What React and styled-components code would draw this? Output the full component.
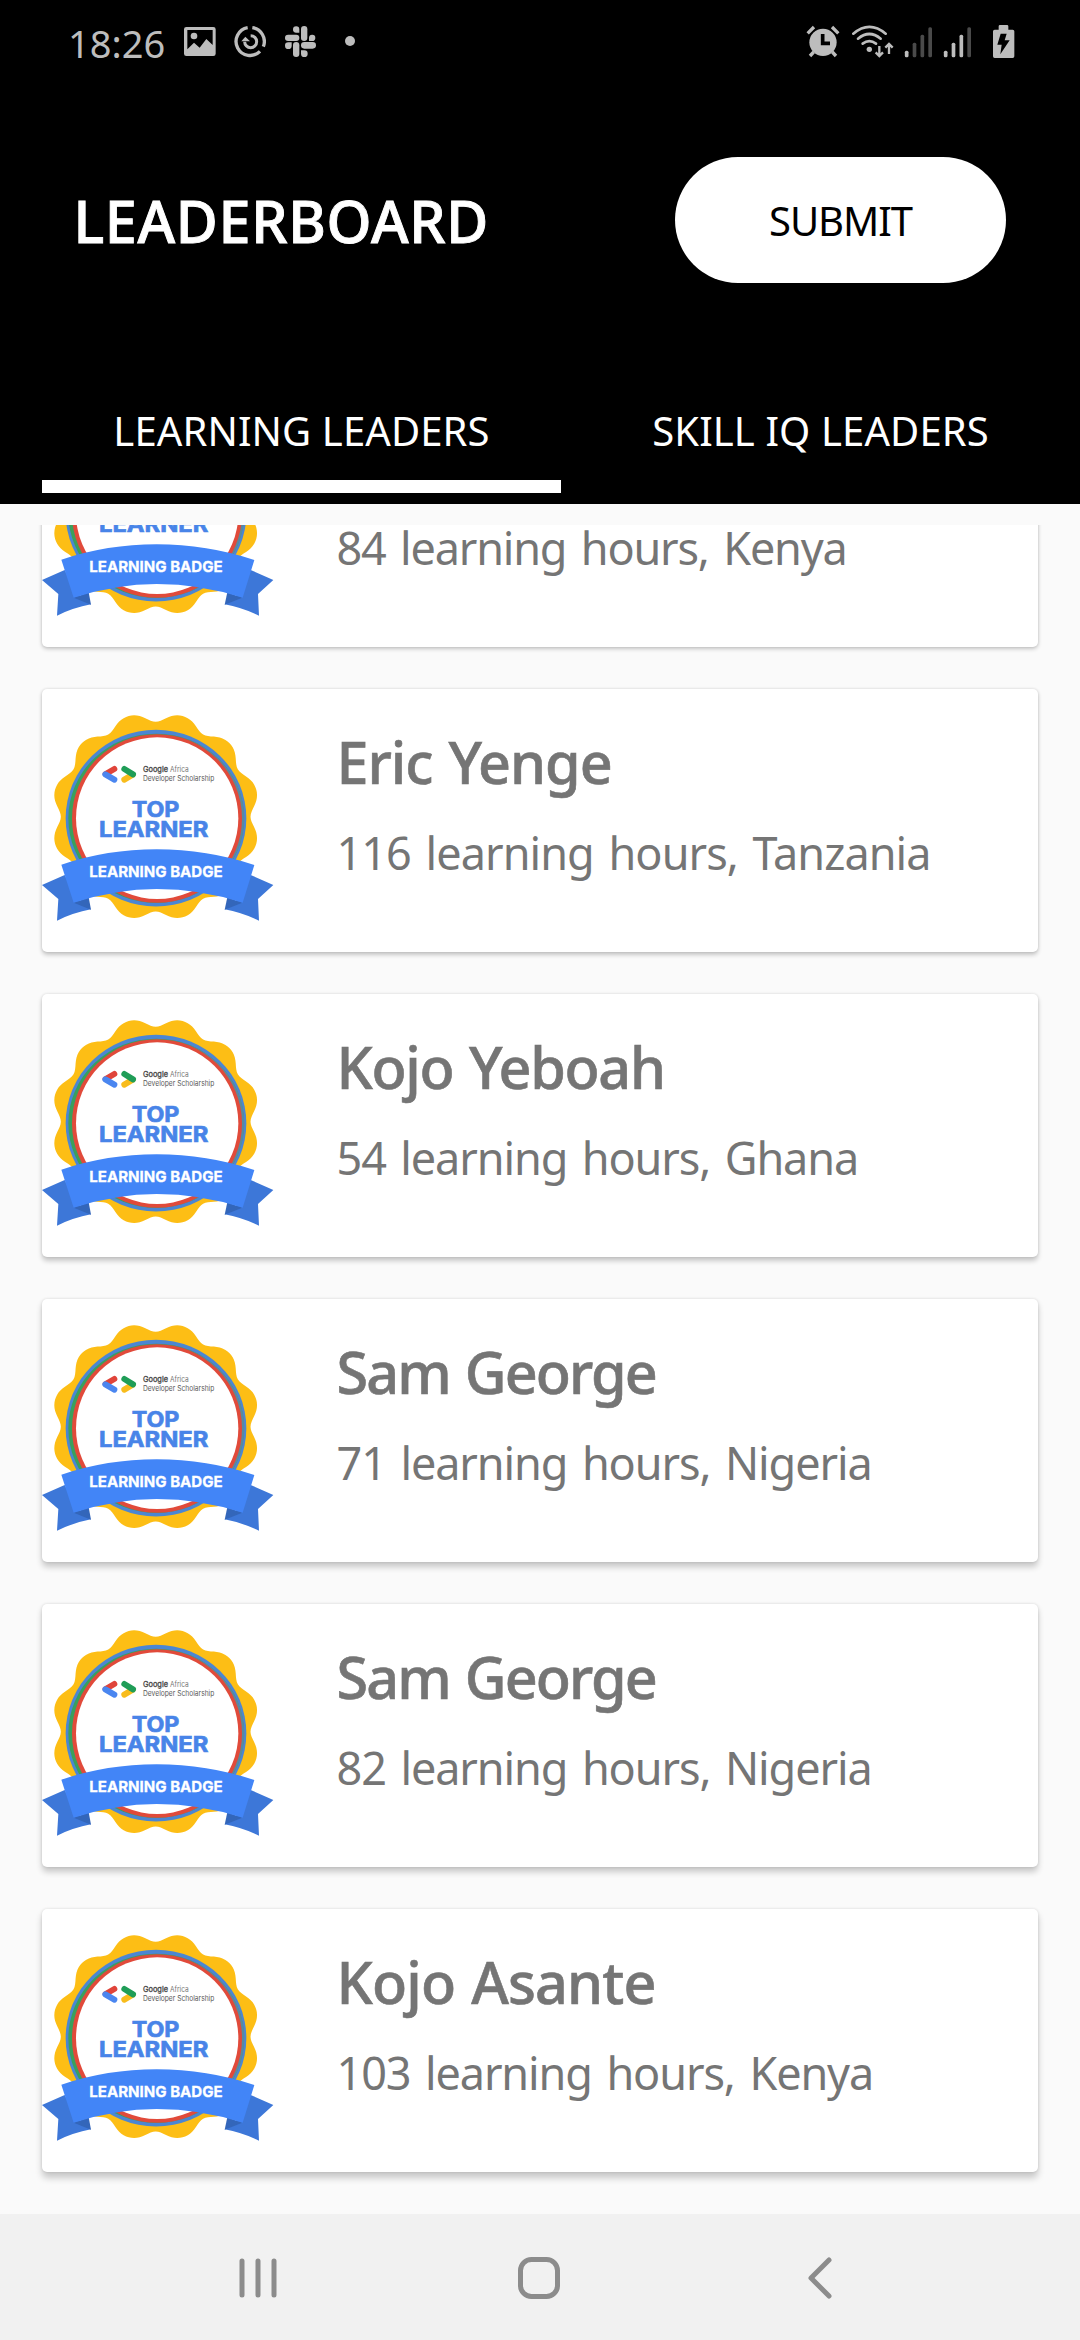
import React from "react";
import styled, { createGlobalStyle } from "styled-components";

const GlobalStyle = createGlobalStyle`
  * { box-sizing: border-box; }
  html, body { margin: 0; padding: 0; }
  body { background: #fafafa; font-family: "Noto Sans", "Open Sans", sans-serif; }
`;

const Screen = styled.div`
  width: 1080px;
  height: 2340px;
  display: flex;
  flex-direction: column;
  overflow: hidden;
  background: #fafafa;
`;

const Header = styled.header`
  height: 504px;
  flex: none;
  display: flex;
  flex-direction: column;
  background: #000;
  color: #fff;
`;

const StatusBar = styled.div`
  height: 84px;
  padding: 0 65px 0 68px;
  display: flex;
  align-items: center;
  justify-content: space-between;
  color: #bdbdbd;
`;

const StatusGroup = styled.div`
  display: flex;
  align-items: center;
`;

const Clock = styled.span`
  width: 116px;
  font-size: 38px;
  line-height: 84px;
  padding-top: 1px;
`;

const StatusIcon = styled.svg`
  width: ${(p) => p.$width}px;
  height: 36px;
  margin-left: ${(p) => p.$gap || 0}px;
  flex: none;
  fill: none;
`;

const MoreDot = styled.span`
  width: 10px;
  height: 10px;
  margin: -2px 0 0 28px;
  border-radius: 50%;
  background: currentColor;
`;

const TitleRow = styled.div`
  height: 272px;
  padding: 0 74px 0 73.5px;
  display: flex;
  align-items: center;
  justify-content: space-between;
`;

const Title = styled.h1`
  margin: 0;
  padding-top: 2px;
  font-size: 57.5px;
  font-weight: 500;
  line-height: 60px;
  letter-spacing: 0.65px;
  -webkit-text-stroke: 0.9px currentColor;
`;

const SubmitButton = styled.button`
  width: 331px;
  height: 126px;
  padding: 2px 0 0;
  border: 0;
  border-radius: 63px;
  background: #fff;
  color: #000;
  font-family: inherit;
  font-size: 40px;
  line-height: 56px;
  letter-spacing: -1.05px;
`;

const Tabs = styled.nav`
  padding: 25px 0 11px 42px;
  display: grid;
  grid-template-columns: 519px 519px;
`;

const Tab = styled.div`
  height: 112px;
  border-bottom: 13px solid ${(p) => (p.$active ? "#fff" : "transparent")};
  font-size: 40px;
  line-height: 100px;
  letter-spacing: 0.11px;
  text-align: center;
  white-space: nowrap;
`;

const List = styled.main`
  margin-top: 21px;
  padding: 0 42px 42px;
  flex: 1;
  min-height: 0;
  display: flex;
  flex-direction: column;
  justify-content: flex-end;
  gap: 42px;
  overflow: hidden;
`;

const Card = styled.article`
  height: 263px;
  flex: none;
  display: flex;
  border-radius: 5px;
  background: #fff;
  box-shadow: 0 ${(p) => p.$lift}px ${(p) => p.$lift + 2}px rgba(0, 0, 0, 0.2),
    0 0 3px rgba(0, 0, 0, 0.12);
`;

const BadgeArt = styled.svg`
  width: 232px;
  height: 263px;
  flex: none;
`;

const Details = styled.div`
  padding: 42.5px 0 0 62.5px;
  display: flex;
  flex-direction: column;
  gap: 36px;
  color: #757575;
  white-space: nowrap;
`;

const Name = styled.h2`
  margin: 0;
  font-size: 57.5px;
  font-weight: 500;
  line-height: 60px;
  word-spacing: 2px;
  letter-spacing: ${(p) => p.$tracking}px;
  -webkit-text-stroke: 0.6px currentColor;
`;

const Summary = styled.p`
  margin: 0;
  font-size: 45px;
  line-height: 50px;
  word-spacing: 4px;
  letter-spacing: ${(p) => p.$tracking}px;
`;

const NavBar = styled.footer`
  height: 126px;
  flex: none;
  padding-right: 2px;
  display: grid;
  grid-template-columns: repeat(3, 281px);
  justify-content: center;
  align-items: center;
  justify-items: center;
  background: #f1f1f1;
`;

const NavIcon = styled.svg`
  width: 48px;
  height: 48px;
  margin-top: 2px;
  fill: none;
  stroke: #8c8c8c;
  stroke-width: 5;
  stroke-linecap: round;
  stroke-linejoin: round;
`;

const ArtText = styled.text`
  font-family: "Inter", "Liberation Sans", sans-serif;
  font-weight: ${(p) => (p.$light ? 400 : 700)};
  font-size: ${(p) => p.$size}px;
`;

// Rosette outline with twelve rounded lobes.
const rosette = Array.from({ length: 240 }, (_, i) => {
  const a = (i / 240) * Math.PI * 2;
  const r = 300 - 14 * Math.cos(12 * a) - 1.5 * Math.cos(24 * a);
  const x = 377 + r * Math.sin(a);
  const y = 410 - r * Math.cos(a);
  return `${x.toFixed(1)},${y.toFixed(1)}`;
}).join(" ");

function Badge() {
  return (
    <BadgeArt viewBox="36 27 696 789">
      <polygon points={rosette} fill="#fdbe15" />
      <ellipse cx="378" cy="414.5" rx="271" ry="265" fill="#4b86d3" />
      <ellipse cx="378.5" cy="415" rx="263.5" ry="254" fill="#3aa05c" />
      <path d="M378 161a265 254 0 0 1 0 508a255 254 0 0 0 0-508z" fill="#5a8a9c" />
      <ellipse cx="381" cy="415.5" rx="255" ry="253" fill="#e14a3a" />
      <ellipse cx="381.5" cy="414.5" rx="243.5" ry="242.5" fill="#fff" />

      <g fill="none" strokeWidth="18" strokeLinecap="round">
        <path d="M227 282L253 267" stroke="#e0443a" />
        <path d="M226 283L253 299" stroke="#4a86f0" />
        <path d="M308 284L283 299" stroke="#f8bc1c" />
        <path d="M283 267L309 283" stroke="#1f9d57" />
      </g>

      <ArtText $size={24} $light x="339" y="276" fill="#4a4a4a" stroke="#4a4a4a" strokeWidth="1" textLength="75" lengthAdjust="spacingAndGlyphs">Google</ArtText>
      <ArtText $size={23} $light x="420" y="276" fill="#777" textLength="56" lengthAdjust="spacingAndGlyphs">Africa</ArtText>
      <ArtText $size={23} $light x="339" y="303" fill="#5c5c5c" textLength="214" lengthAdjust="spacingAndGlyphs">Developer Scholarship</ArtText>
      <ArtText $size={64} x="305" y="410" fill="#4884e8" stroke="#4884e8" strokeWidth="2" textLength="143" lengthAdjust="spacingAndGlyphs">TOP</ArtText>
      <ArtText $size={64} x="207" y="470" fill="#4884e8" stroke="#4884e8" strokeWidth="2" textLength="328" lengthAdjust="spacingAndGlyphs">LEARNER</ArtText>

      <path d="M36 615L104 585L140 655L183 688Q130 698 81 722L85 657Z" fill="#3d77d8" />
      <path d="M730 615L662 585L628 655L584 688Q637 698 687 722L684 657Z" fill="#3d77d8" />
      <path d="M131 668L176 652L183 689Z" fill="#3366ba" />
      <path d="M637 668L592 652L584 689Z" fill="#3366ba" />
      <path d="M94 554Q232 508 380 508Q530 508 673 555L638 668Q510 627 380 627Q260 627 131 668Z" fill="#4285f7" />
      <ArtText $size={45} x="178" y="591" fill="#fff" stroke="#fff" strokeWidth="0.8" textLength="400" lengthAdjust="spacingAndGlyphs">LEARNING BADGE</ArtText>
    </BadgeArt>
  );
}

const leaders = [
  { name: "Kojo Asante", hours: 84, country: "Kenya", nameGap: -0.87, gap: -1.19 },
  { name: "Eric Yenge", hours: 116, country: "Tanzania", nameGap: -1.03, gap: -0.95 },
  { name: "Kojo Yeboah", hours: 54, country: "Ghana", nameGap: -1.3, gap: -1.11 },
  { name: "Sam George", hours: 71, country: "Nigeria", nameGap: -1.9, gap: -1.1 },
  { name: "Sam George", hours: 82, country: "Nigeria", nameGap: -1.9, gap: -1.1 },
  { name: "Kojo Asante", hours: 103, country: "Kenya", nameGap: -0.87, gap: -1.11 },
];

function PictureIcon() {
  return (
    <StatusIcon $width={32} viewBox="432 72 96 108">
      <path
        fillRule="evenodd"
        fill="currentColor"
        d="M439 81H520Q527 81 527 88V161Q527 168 520 168H439Q432 168 432 161V88Q432 81 439 81ZM442 90V148L462 128L479 143L499 117L518 135V90Z"
      />
      <circle cx="462" cy="108" r="10" fill="currentColor" />
    </StatusIcon>
  );
}

function UsageIcon() {
  return (
    <StatusIcon $width={32} $gap={18} viewBox="582 72 96 108" stroke="currentColor">
      <path d="M623 83A42 42 0 1 0 660 154" strokeWidth="10" />
      <path d="M637 83A42 42 0 0 1 670 140" strokeWidth="10" />
      <path d="M632 107A18 18 0 1 1 614 125" strokeWidth="9" />
      <path d="M604 124L616 110L630 124Z" fill="currentColor" stroke="none" />
    </StatusIcon>
  );
}

function SlackIcon() {
  return (
    <StatusIcon $width={32} $gap={19} viewBox="735 72 96 108">
      <g fill="currentColor">
        <rect x="783" y="78" width="19" height="45" rx="9.5" />
        <rect x="783" y="126" width="45" height="20" rx="10" />
        <rect x="759" y="126" width="19" height="45" rx="9.5" />
        <rect x="735" y="104" width="43" height="19" rx="9.5" />
        <path d="M778 98V88.500A9.500 9.500 0 1 0 768.500 98Z" />
        <path d="M807 123V113A9.500 9.500 0 1 1 816.500 123Z" />
        <path d="M783 151H793A10 10 0 1 1 783 161Z" />
        <path d="M755 127V137A10 10 0 1 1 745 127Z" />
      </g>
    </StatusIcon>
  );
}

function AlarmIcon() {
  return (
    <StatusIcon $width={34} viewBox="78 72 102 108" stroke="currentColor">
      <circle cx="129" cy="127" r="41" fill="currentColor" stroke="none" />
      <path d="M83 100L102 81M175 100L156 81" strokeWidth="10" />
      <path d="M101 156L90 168M157 156L168 168" strokeWidth="10" />
      <path d="M128 102V130H150" stroke="#000" strokeWidth="11" />
    </StatusIcon>
  );
}

function WifiIcon() {
  return (
    <StatusIcon $width={42} $gap={12} viewBox="216 72 126 108" stroke="currentColor">
      <g strokeWidth="8" strokeLinecap="round">
        <path d="M220 101Q268 60 317 101" />
        <path d="M234 116Q268 88 302 116" />
        <path d="M248 131Q268 116 288 131" />
      </g>
      <circle cx="268" cy="148" r="8" fill="currentColor" stroke="none" />
      <path d="M298 138V166M287 157L298 168L309 157M327 162V134M316 143L327 132L338 143" strokeWidth="7" />
    </StatusIcon>
  );
}

function SignalIcon({ level, gap }) {
  return (
    <StatusIcon $width={29} $gap={gap} viewBox="372 72 87 108">
      {[152, 128, 104, 82].map((top, i) => (
        <rect
          key={top}
          x={374.5 + i * 23.5}
          y={top}
          width="11"
          height={172 - top}
          rx="4.5"
          fill={i < level ? "#bdbdbd" : "#4a4a4a"}
        />
      ))}
    </StatusIcon>
  );
}

function BatteryIcon() {
  return (
    <StatusIcon $width={23} $gap={20} viewBox="636 72 69 108">
      <path
        d="M660 75H681Q685 75 685 79V89H698Q703 89 703 94V169Q703 174 698 174H644Q639 174 639 169V94Q639 89 644 89H656V79Q656 75 660 75Z"
        fill="currentColor"
      />
      <path d="M662 101H680L674 121H689L661 163L665 134H652Z" fill="#000" />
    </StatusIcon>
  );
}

export default function App() {
  return (
    <Screen>
      <GlobalStyle />
      <Header>
        <StatusBar>
          <StatusGroup>
            <Clock>18:26</Clock>
            <PictureIcon />
            <UsageIcon />
            <SlackIcon />
            <MoreDot />
          </StatusGroup>
          <StatusGroup>
            <AlarmIcon />
            <WifiIcon />
            <SignalIcon level={1} gap={10} />
            <SignalIcon level={3} gap={10} />
            <BatteryIcon />
          </StatusGroup>
        </StatusBar>
        <TitleRow>
          <Title>LEADERBOARD</Title>
          <SubmitButton>SUBMIT</SubmitButton>
        </TitleRow>
        <Tabs>
          <Tab $active>LEARNING LEADERS</Tab>
          <Tab>SKILL IQ LEADERS</Tab>
        </Tabs>
      </Header>

      <List>
        {leaders.map((l, i) => (
          <Card key={i} $lift={2 + i * 0.7}>
            <Badge />
            <Details>
              <Name $tracking={l.nameGap}>{l.name}</Name>
              <Summary $tracking={l.gap}>
                {`${l.hours} learning hours, ${l.country}`}
              </Summary>
            </Details>
          </Card>
        ))}
      </List>

      <NavBar>
        <NavIcon viewBox="0 0 48 48">
          <path d="M8 7V41M24 7V41M40 7V41" />
        </NavIcon>
        <NavIcon viewBox="0 0 48 48">
          <rect x="5.500" y="5.500" width="37" height="37" rx="11" />
        </NavIcon>
        <NavIcon viewBox="0 0 48 48">
          <path d="M33 6L15 24L33 42" />
        </NavIcon>
      </NavBar>
    </Screen>
  );
}
